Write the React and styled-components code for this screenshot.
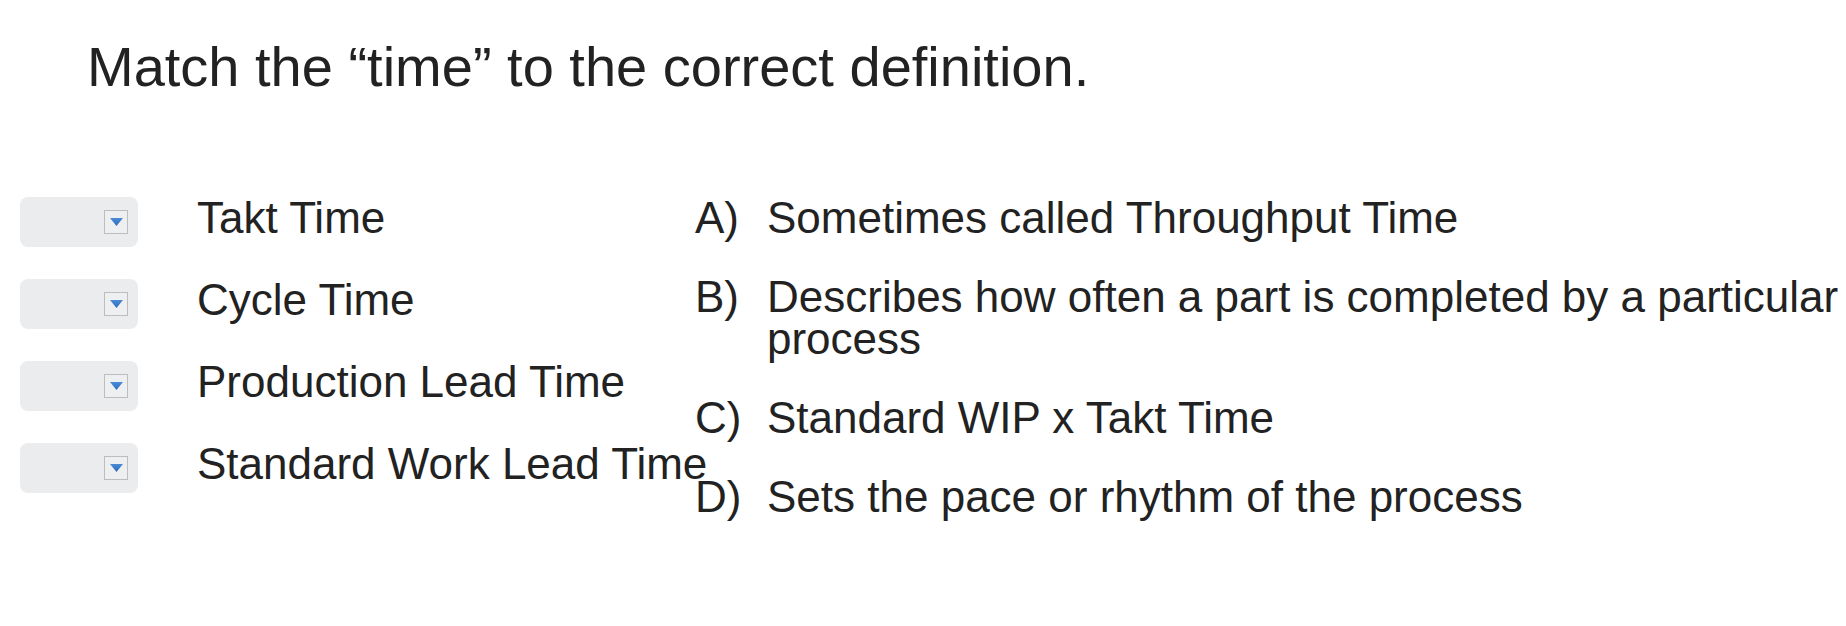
import React from "react";
import styled, { createGlobalStyle } from "styled-components";

const GlobalStyle = createGlobalStyle`
  body {
    margin: 0;
    background: #ffffff;
    color: #222222;
    font-family: "Liberation Sans", Arial, Helvetica, sans-serif;
  }
`;

const Page = styled.div`
  width: 1846px;
  min-height: 626px;
`;

const Title = styled.h1`
  margin: 0;
  padding: 35px 0 0 87px;
  font-size: 56px;
  font-weight: 400;
  line-height: 64px;
`;

const Matcher = styled.div`
  display: flex;
  margin-top: 98px;
`;

const Terms = styled.div`
  display: flex;
  flex-direction: column;
  gap: 32px;
  width: 695px;
  flex-shrink: 0;
`;

const TermRow = styled.div`
  display: flex;
  align-items: flex-start;
  height: 50px;
`;

const Select = styled.div`
  display: flex;
  align-items: center;
  justify-content: flex-end;
  flex-shrink: 0;
  box-sizing: border-box;
  margin-left: 20px;
  width: 118px;
  height: 50px;
  padding-right: 10px;
  border-radius: 8px;
  background: #ebecee;
`;

const ArrowBox = styled.div`
  display: flex;
  align-items: center;
  justify-content: center;
  box-sizing: border-box;
  width: 24px;
  height: 24px;
  border: 1px solid #bdbdbd;
  background: #eeeff1;
`;

const TermLabel = styled.div`
  margin-left: 59px;
  font-size: 44px;
  line-height: 42px;
  white-space: nowrap;
`;

const Definitions = styled.div`
  display: flex;
  flex-direction: column;
  gap: 37px;
  flex: 1;
`;

const Definition = styled.div`
  display: flex;
  font-size: 44px;
  line-height: 42px;
`;

const Letter = styled.div`
  width: 72px;
  flex-shrink: 0;
`;

const DefText = styled.div`
  flex: 1;
`;

const DropArrow = () => (
  <svg width="13" height="8" viewBox="0 0 13 8">
    <defs>
      <linearGradient id="dropBlue" x1="0" y1="0" x2="0" y2="1">
        <stop offset="0" stopColor="#4a8ad6" />
        <stop offset="1" stopColor="#2f6dbb" />
      </linearGradient>
    </defs>
    <polygon points="0,0 13,0 6.5,8" fill="url(#dropBlue)" />
  </svg>
);

const terms = [
  "Takt Time",
  "Cycle Time",
  "Production Lead Time",
  "Standard Work Lead Time",
];

const definitions = [
  ["A)", "Sometimes called Throughput Time"],
  ["B)", "Describes how often a part is completed by a particular process"],
  ["C)", "Standard WIP x Takt Time"],
  ["D)", "Sets the pace or rhythm of the process"],
];

export default function App() {
  return (
    <Page>
      <GlobalStyle />
      <Title>Match the “time” to the correct definition.</Title>
      <Matcher>
        <Terms>
          {terms.map((term) => (
            <TermRow key={term}>
              <Select>
                <ArrowBox>
                  <DropArrow />
                </ArrowBox>
              </Select>
              <TermLabel>{term}</TermLabel>
            </TermRow>
          ))}
        </Terms>
        <Definitions>
          {definitions.map(([letter, text]) => (
            <Definition key={letter}>
              <Letter>{letter}</Letter>
              <DefText>{text}</DefText>
            </Definition>
          ))}
        </Definitions>
      </Matcher>
    </Page>
  );
}
